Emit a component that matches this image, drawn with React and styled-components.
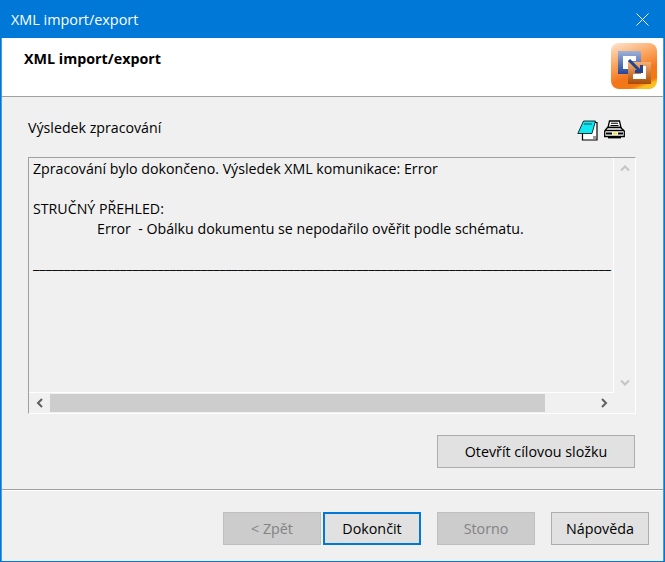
import React from 'react';
import styled, { createGlobalStyle } from 'styled-components';

const Global = createGlobalStyle`
  html, body { margin: 0; padding: 0; background: #f0f0f0; }
  body { font-family: "Open Sans", "Noto Sans", sans-serif; font-size: 14.2px; color: #000; }
`;
const Window = styled.div`
  width: 665px; height: 562px; box-sizing: border-box;
  display: flex; flex-direction: column;
  border: 1px solid #0078d7; border-width: 0 1px 1px 1px;
  box-shadow: inset 1px 0 0 #4a9be0, inset -1px 0 0 #4a9be0;
  background: #f0f0f0; overflow: hidden;
`;
const TitleBar = styled.div`
  height: 38px; flex: none; background: #0078d7; color: #fff;
  display: flex; align-items: center; justify-content: space-between;
  padding: 0 15px 0 10px; font-size: 14.4px;
`;
const Header = styled.div`
  height: 58px; flex: none; background: #fff; margin: 0 1px;
  border-bottom: 1px solid #a0a0a0; box-sizing: content-box;
  display: flex; justify-content: space-between; padding: 0 6px 0 22px;
`;
const HeaderTitle = styled.div`
  font-weight: 700; font-size: 14.3px; padding-top: 11px; line-height: 20px;
`;
const Logo = styled.svg`
  width: 46px; height: 46px; margin-top: 5px;
`;
const Body = styled.div`
  flex: none; display: flex; flex-direction: column; padding: 0 28px 0 27px;
`;
const ResultRow = styled.div`
  height: 60px; flex: none; display: flex; justify-content: space-between; align-items: flex-start;
  padding-top: 20px; box-sizing: border-box;
`;
const ResultLabel = styled.div`
  line-height: 20px; margin-top: 1px;
`;
const Tools = styled.div`
  display: flex; gap: 6px; margin-right: 11px; margin-top: 3px;
`;
const ListBox = styled.div`
  height: 257px; box-sizing: border-box; flex: none;
  display: grid; grid-template-columns: 1fr 21px; grid-template-rows: 1fr 20px;
  border-top: 1px solid #a0a0a0; border-left: 1px solid #a0a0a0;
  border-right: 1px solid #fff; border-bottom: 1px solid #fff;
`;
const TextArea = styled.div`
  overflow: hidden; padding: 1px 0 0 4px; line-height: 20px; white-space: pre;
  border-right: 1px solid #fff; border-bottom: 1px solid #fff;
`;
const Line = styled.div`
  height: 20px;
`;
const IndentedLine = styled(Line)`
  padding-left: 64px;
`;
const RuleLine = styled(Line)`
  margin-top: -5px;
`;
const VScroll = styled.div`
  display: flex; flex-direction: column; justify-content: space-between; align-items: center;
  padding: 6px 0;
`;
const HScroll = styled.div`
  display: flex; align-items: center; grid-column: 1;
`;
const ArrowCell = styled.div`
  width: 21px; flex: none; display: flex; align-items: center; justify-content: center;
`;
const Thumb = styled.div`
  width: 495px; height: 18px; background: #cdcdcd; flex: none;
`;
const Spacer = styled.div`
  flex: 1;
`;
const Corner = styled.div``;
const OpenRow = styled.div`
  display: flex; justify-content: flex-end; margin-top: 21px; padding-right: 1px;
`;
const Btn = styled.button`
  height: 33px; width: ${p => p.$w || 98}px; box-sizing: border-box; padding: 0 0 1px;
  font: 14.3px "Open Sans", "Noto Sans", sans-serif;
  background: ${p => (p.disabled ? '#cccccc' : '#e1e1e1')};
  color: ${p => (p.disabled ? '#838383' : '#000')};
  border: ${p => (p.$focus ? '2px solid #0078d7' : p.disabled ? '1px solid #bfbfbf' : '1px solid #adadad')};
`;
const Separator = styled.div`
  height: 1px; background: #a0a0a0; margin: 21px 1px 0; flex: none;
  box-shadow: 0 1px 0 #fff;
`;
const Footer = styled.div`
  flex: 1; display: flex; justify-content: flex-end; align-items: flex-start;
  padding: 22px 15px 0 0; box-sizing: border-box;
`;
const Gap = styled.div`
  width: ${p => p.$w}px; flex: none;
`;

const Chevron = ({ d }) => (
  <svg width="10" height="8" viewBox="0 0 10 8"><path d={d} fill="none" stroke="#c4c4c4" strokeWidth="2" /></svg>
);
const HChev = ({ d }) => (
  <svg width="8" height="10" viewBox="0 0 8 10"><path d={d} fill="none" stroke="#606060" strokeWidth="2" /></svg>
);

export default function App() {
  return (
    <Window>
      <Global />
      <TitleBar>
        <span>XML import/export</span>
        <svg width="13" height="13" viewBox="0 0 13 13"><path d="M.5.5l12 12M12.5.5l-12 12" stroke="#fff" strokeWidth="1" /></svg>
      </TitleBar>
      <Header>
        <HeaderTitle>XML import/export</HeaderTitle>
        <Logo viewBox="0 0 46 46">
          <defs>
            <linearGradient id="lg" x1="0.2" y1="0" x2="0.6" y2="1">
              <stop offset="0" stopColor="#fcdcc0" />
              <stop offset="0.3" stopColor="#fbb070" />
              <stop offset="0.7" stopColor="#f4761c" />
              <stop offset="0.92" stopColor="#f27a10" />
              <stop offset="1" stopColor="#fbc020" />
            </linearGradient>
            <linearGradient id="bl" x1="0" y1="0" x2="0" y2="1">
              <stop offset="0" stopColor="#9fb2d8" />
              <stop offset="1" stopColor="#24459a" />
            </linearGradient>
            <linearGradient id="or" x1="0" y1="0" x2="0" y2="1">
              <stop offset="0" stopColor="#f4b074" />
              <stop offset="1" stopColor="#a84a08" />
            </linearGradient>
          </defs>
          <rect width="46" height="46" rx="8" fill="url(#lg)" />
          <rect x="7" y="8" width="23" height="23" fill="url(#bl)" />
          <rect x="17" y="19" width="23" height="22" fill="url(#or)" />
          <path d="M12 13h13v5H17v8h-5z" fill="#fff" />
          <path d="M35 36H22v-5h8v-8h5z" fill="#fff" />
          <path d="M18 17l12 12M24 28.500h6.500V22" fill="none" stroke="#23458f" strokeWidth="3" />
        </Logo>
      </Header>
      <Body>
        <ResultRow>
          <ResultLabel>Výsledek zpracování</ResultLabel>
          <Tools>
            <svg width="21" height="21" viewBox="0 0 21 21">
              <path d="M5.500 13v7h14.500V2.500h-2" fill="#fff" stroke="#000" strokeWidth="1.200" />
              <path d="M6.500 1h12L15 13.500H.8z" fill="#12e6f0" stroke="#000" strokeWidth="0.8" />
              <path d="M7 4h8" stroke="#0a7f90" strokeWidth="1.500" />
              <rect x="16" y="16" width="3" height="3" fill="#999" />
            </svg>
            <svg width="21" height="20" viewBox="0 0 21 20">
              <path d="M5.500 1h10l1.500 6.500H4z" fill="#fff" stroke="#000" strokeWidth="1.300" />
              <path d="M7 3.200h7M6.500 5.500h8" stroke="#000" strokeWidth="1.100" />
              <path d="M3.500 7.500h13l3.800 3.500v5.500H.7V11z" fill="#fff" stroke="#000" strokeWidth="1.300" />
              <path d="M1 10.500h19" stroke="#000" strokeWidth="1.500" />
              <rect x="9" y="12.500" width="4" height="2" fill="#f8e020" />
              <path d="M2 13.500h6M14 13.500h5" stroke="#000" strokeWidth="2" />
              <path d="M4 17.500h13" stroke="#000" strokeWidth="1.800" />
            </svg>
          </Tools>
        </ResultRow>
        <ListBox>
          <TextArea>
            <Line>Zpracování bylo dokončeno. Výsledek XML komunikace: Error</Line>
            <Line />
            <Line>STRUČNÝ PŘEHLED:</Line>
            <IndentedLine>Error  - Obálku dokumentu se nepodařilo ověřit podle schématu.</IndentedLine>
            <Line />
            <RuleLine>{'_'.repeat(93)}</RuleLine>
          </TextArea>
          <VScroll>
            <Chevron d="M1 6.500l4-4 4 4" />
            <Chevron d="M1 1.500l4 4 4-4" />
          </VScroll>
          <HScroll>
            <ArrowCell><HChev d="M6 1L2 5l4 4" /></ArrowCell>
            <Thumb />
            <Spacer />
            <ArrowCell><HChev d="M2 1l4 4-4 4" /></ArrowCell>
          </HScroll>
          <Corner />
        </ListBox>
        <OpenRow>
          <Btn $w={198}>Otevřít cílovou složku</Btn>
        </OpenRow>
      </Body>
      <Separator />
      <Footer>
        <Btn disabled>&lt; Zpět</Btn>
        <Gap $w={2} />
        <Btn $focus>Dokončit</Btn>
        <Gap $w={16} />
        <Btn disabled>Storno</Btn>
        <Gap $w={16} />
        <Btn>Nápověda</Btn>
      </Footer>
    </Window>
  );
}
